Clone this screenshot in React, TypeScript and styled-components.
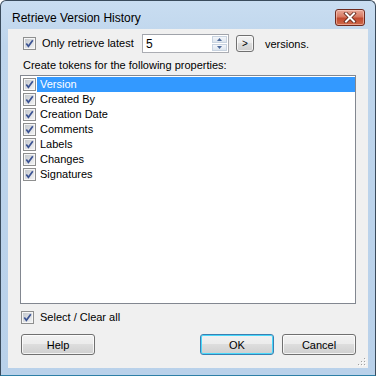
import React, { useState } from "react";
import styled, { createGlobalStyle } from "styled-components";

const GlobalStyle = createGlobalStyle`
  html, body {
    margin: 0;
    padding: 0;
    background: #ffffff;
  }
  body {
    font-family: "Liberation Sans", Arial, sans-serif;
    font-size: 11px;
    color: #000;
  }
`;

const Window = styled.div`
  box-sizing: border-box;
  width: 376px;
  height: 376px;
  border: 1px solid #3a4b5c;
  border-bottom-color: #2d7fa6;
  border-radius: 6px 6px 0 0;
  background: linear-gradient(180deg, #c9ddf1 0%, #bed5ec 12%, #b9d1ea 100%);
  display: flex;
  flex-direction: column;
  padding: 0 7px 7px;
`;

const TitleBar = styled.div`
  height: 28px;
  display: flex;
  align-items: flex-start;
  justify-content: space-between;
  padding-left: 4px;
  flex-shrink: 0;
`;

const Title = styled.span`
  margin-top: 10px;
  font-size: 12px;
  line-height: 14px;
  color: #000;
`;

const CloseButton = styled.button`
  all: unset;
  box-sizing: border-box;
  margin-top: 8px;
  margin-right: 3px;
  width: 30px;
  height: 17px;
  border: 1px solid #6f2b1f;
  border-radius: 3px;
  background: linear-gradient(180deg, #e9a999 0%, #d77a63 45%, #c14a30 55%, #cf6a4b 100%);
  box-shadow: inset 0 0 0 1px rgba(255, 220, 210, 0.5);
  display: flex;
  align-items: center;
  justify-content: center;
`;

const Client = styled.div`
  position: relative;
  flex: 1;
  background: #f0f0f0;
  display: flex;
  flex-direction: column;
  padding: 5px 12px 0 12px;
`;

const TopRow = styled.div`
  display: flex;
  align-items: center;
  height: 19px;
  padding-left: 3px;
`;

const CheckLabel = styled.label<{ $width?: number }>`
  display: flex;
  align-items: center;
  gap: 6px;
  width: ${(p) => (p.$width ? `${p.$width}px` : "auto")};
  line-height: 13px;
  white-space: nowrap;
`;

const SpinBox = styled.div`
  box-sizing: border-box;
  width: 87px;
  height: 19px;
  border: 1px solid #abadb3;
  border-top-color: #a0a3aa;
  background: #fff;
  display: flex;
  align-items: center;
  padding: 0 1px 0 3px;
`;

const SpinValue = styled.span`
  flex: 1;
  font-size: 12px;
`;

const SpinButtons = styled.div`
  display: flex;
  flex-direction: column;
  gap: 1px;
`;

const SpinHalf = styled.div`
  box-sizing: border-box;
  width: 15px;
  height: 7px;
  border: 1px solid #c8d3e0;
  background: linear-gradient(180deg, #f3f6fa, #dde5ee);
  display: flex;
  align-items: center;
  justify-content: center;
`;

const SmallButton = styled.button`
  all: unset;
  box-sizing: border-box;
  margin-left: 7px;
  width: 18px;
  height: 17px;
  border: 1px solid #707070;
  border-radius: 3px;
  background: linear-gradient(180deg, #f2f2f2 0%, #ebebeb 50%, #dddddd 50%, #cfcfcf 100%);
  box-shadow: inset 0 0 0 1px rgba(255, 255, 255, 0.7);
  font-size: 10px;
  display: flex;
  align-items: center;
  justify-content: center;
`;

const Suffix = styled.span`
  margin-left: 11px;
`;

const SectionLabel = styled.div`
  margin-top: 6px;
  padding-left: 3px;
  line-height: 13px;
`;

const ListBox = styled.div`
  box-sizing: border-box;
  margin-top: 3px;
  height: 229px;
  border: 1px solid #828790;
  background: #fff;
  padding: 1px 0 1px 1px;
  display: flex;
  flex-direction: column;
`;

const ListItem = styled.div`
  display: flex;
  align-items: center;
  height: 15px;
  padding-left: 1px;
  gap: 1px;
`;

const ItemText = styled.span<{ $selected: boolean }>`
  flex: 1;
  height: 15px;
  line-height: 15px;
  padding-left: 3px;
  background: ${(p) => (p.$selected ? "#3399ff" : "transparent")};
  color: ${(p) => (p.$selected ? "#fff" : "#000")};
`;

const SelectAllRow = styled.div`
  margin-top: 7px;
  padding-left: 1px;
  height: 13px;
  display: flex;
  align-items: center;
`;

const ButtonRow = styled.div`
  margin-top: 10px;
  padding-left: 1px;
  display: flex;
  justify-content: space-between;
`;

const ButtonGroup = styled.div`
  display: flex;
  gap: 8px;
`;

const PushButton = styled.button<{ $default?: boolean }>`
  all: unset;
  box-sizing: border-box;
  width: 74px;
  height: 21px;
  border: 1px solid ${(p) => (p.$default ? "#3c7fb1" : "#707070")};
  border-radius: 3px;
  background: linear-gradient(180deg, #f2f2f2 0%, #ebebeb 50%, #dddddd 50%, #cfcfcf 100%);
  box-shadow: inset 0 0 0 1px ${(p) => (p.$default ? "#48d8fb" : "rgba(255, 255, 255, 0.75)")};
  font-size: 11px;
  display: flex;
  align-items: center;
  justify-content: center;
  color: #000;
`;

const Grip = styled.svg`
  position: absolute;
  right: 2px;
  bottom: 2px;
`;

const CheckBox: React.FC<{ checked: boolean }> = ({ checked }) => (
  <svg width="13" height="13" viewBox="0 0 13 13" style={{ flexShrink: 0 }}>
    <defs>
      <linearGradient id="cbfill" x1="0" y1="0" x2="1" y2="1">
        <stop offset="0" stopColor="#c4c8ce" />
        <stop offset="1" stopColor="#f1f2f3" />
      </linearGradient>
    </defs>
    <rect x="0.5" y="0.5" width="12" height="12" fill="#f6f6f6" stroke="#8e8f8f" />
    <rect x="2" y="2" width="9" height="9" fill="url(#cbfill)" />
    {checked && (
      <path
        d="M3.3 6.4 L5.4 9.2 L9.8 3.2"
        fill="none"
        stroke="#3b5393"
        strokeWidth="1.7"
        strokeLinejoin="miter"
      />
    )}
  </svg>
);

const properties = [
  "Version",
  "Created By",
  "Creation Date",
  "Comments",
  "Labels",
  "Changes",
  "Signatures",
];

export default function App() {
  const [selected] = useState(0);

  return (
    <>
      <GlobalStyle />
      <Window>
        <TitleBar>
          <Title>Retrieve Version History</Title>
          <CloseButton aria-label="Close">
            <svg width="14" height="11" viewBox="0 0 14 11">
              <path d="M3 1.5 L11 9.5 M11 1.5 L3 9.5" stroke="#5b2216" strokeWidth="3.6" strokeLinecap="square" />
              <path d="M3 1.5 L11 9.5 M11 1.5 L3 9.5" stroke="#ffffff" strokeWidth="2" strokeLinecap="square" />
            </svg>
          </CloseButton>
        </TitleBar>

        <Client>
          <TopRow>
            <CheckLabel $width={119}>
              <CheckBox checked />
              <span>Only retrieve latest</span>
            </CheckLabel>
            <SpinBox>
              <SpinValue>5</SpinValue>
              <SpinButtons>
                <SpinHalf>
                  <svg width="5" height="3" viewBox="0 0 5 3">
                    <path d="M2.5 0 L5 3 L0 3 Z" fill="#4d6a9a" />
                  </svg>
                </SpinHalf>
                <SpinHalf>
                  <svg width="5" height="3" viewBox="0 0 5 3">
                    <path d="M0 0 L5 0 L2.5 3 Z" fill="#4d6a9a" />
                  </svg>
                </SpinHalf>
              </SpinButtons>
            </SpinBox>
            <SmallButton>&gt;</SmallButton>
            <Suffix>versions.</Suffix>
          </TopRow>

          <SectionLabel>Create tokens for the following properties:</SectionLabel>

          <ListBox>
            {properties.map((name, i) => (
              <ListItem key={name}>
                <CheckBox checked />
                <ItemText $selected={i === selected}>{name}</ItemText>
              </ListItem>
            ))}
          </ListBox>

          <SelectAllRow>
            <CheckLabel>
              <CheckBox checked />
              <span>Select / Clear all</span>
            </CheckLabel>
          </SelectAllRow>

          <ButtonRow>
            <PushButton>Help</PushButton>
            <ButtonGroup>
              <PushButton $default>OK</PushButton>
              <PushButton>Cancel</PushButton>
            </ButtonGroup>
          </ButtonRow>

          <Grip width="9" height="9" viewBox="0 0 9 9">
            {[
              [7, 1], [7, 4], [4, 4], [7, 7], [4, 7], [1, 7],
            ].map(([x, y]) => (
              <g key={`${x}-${y}`}>
                <rect x={x + 1} y={y + 1} width="1" height="1" fill="#ffffff" />
                <rect x={x} y={y} width="1" height="1" fill="#a0a0a0" />
              </g>
            ))}
          </Grip>
        </Client>
      </Window>
    </>
  );
}
